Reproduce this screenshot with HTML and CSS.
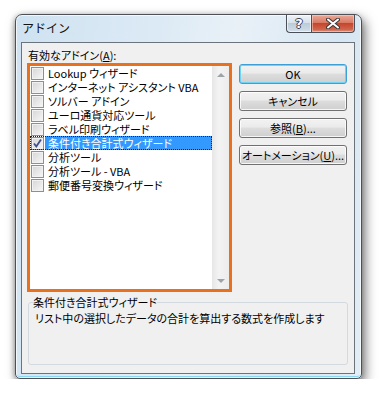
FILE: index.html
```html
<!DOCTYPE html>
<html lang="ja">
<head>
  <meta charset="UTF-8">
  <title>アドイン</title>
  <link rel="stylesheet" href="styles.css">
</head>
<body>

  <div class="window">
    <!-- タイトルバー -->
    <div class="titlebar">
      <span class="title">アドイン</span>
      <div class="caption">
        <button class="cap help">?</button>
        <button class="cap close">
          <svg width="14" height="11" viewBox="0 0 14 11">
            <path d="M2 1.5 L12 9.5 M12 1.5 L2 9.5" stroke="#3a3a3a" stroke-width="4" stroke-linecap="round"/>
            <path d="M2 1.5 L12 9.5 M12 1.5 L2 9.5" stroke="#fff" stroke-width="2" stroke-linecap="round"/>
          </svg>
        </button>
      </div>
    </div>

    <div class="client">
      <div class="label">有効なアドイン(<u>A</u>):</div>

      <div class="main">
        <div class="listwrap">
          <ul class="list">
            <li><span class="chk"></span><span class="txt">Lookup ウィザード</span></li>
            <li><span class="chk"></span><span class="txt">インターネット アシスタント VBA</span></li>
            <li><span class="chk"></span><span class="txt">ソルバー アドイン</span></li>
            <li><span class="chk"></span><span class="txt">ユーロ通貨対応ツール</span></li>
            <li><span class="chk"></span><span class="txt">ラベル印刷ウィザード</span></li>
            <li class="sel">
              <span class="chk">
                <svg width="11" height="11" viewBox="0 0 11 11"><path d="M2 5.5 L4.3 8.5 L9 1.5" fill="none" stroke="#3d4f8c" stroke-width="1.8"/></svg>
              </span><span class="txt">条件付き合計式ウィザード</span>
            </li>
            <li><span class="chk"></span><span class="txt">分析ツール</span></li>
            <li><span class="chk"></span><span class="txt">分析ツール - VBA</span></li>
            <li><span class="chk"></span><span class="txt">郵便番号変換ウィザード</span></li>
          </ul>
          <div class="scrollbar">
            <span class="sb-btn"><span class="arrow up"></span></span>
            <span class="sb-btn"><span class="arrow down"></span></span>
          </div>
        </div>

        <div class="buttons">
          <button class="btn default">OK</button>
          <button class="btn">キャンセル</button>
          <button class="btn">参照(<u>B</u>)...</button>
          <button class="btn">オートメーション(<u>U</u>)...</button>
        </div>
      </div>

      <fieldset class="group">
        <legend>条件付き合計式ウィザード</legend>
        <p>リスト中の選択したデータの合計を算出する数式を作成します</p>
      </fieldset>
    </div>
  </div>

</body>
</html>
```

FILE: styles.css
```css
body {
  margin: 0;
  background: #fff;
  font-family: "Noto Sans CJK JP", "Liberation Sans", sans-serif;
  font-size: 11px;
  font-feature-settings: "palt";
  color: #000;
}

.window {
  box-sizing: border-box;
  width: 347px;
  height: 365px;
  margin: 14px 0 0 15px;
  padding: 0 6px 4px 5px;
  display: flex;
  flex-direction: column;
  border: 1px solid #4d5156;
  border-radius: 7px 7px 5px 5px;
  background: linear-gradient(100deg, #cfe2f1 0%, #dceaf5 35%, #e9f1f7 55%, #d6e6f2 80%, #e3edf5 100%);
  box-shadow:
    inset 0 0 0 1px rgba(255, 255, 255, 0.7),
    inset 0 -2px 0 #8ad6f2,
    3px 5px 12px rgba(0, 0, 0, 0.55),
    -1px 1px 5px rgba(0, 0, 0, 0.25);
}

/* タイトルバー */
.titlebar {
  height: 27px;
  display: flex;
  justify-content: space-between;
  align-items: flex-start;
}
.title {
  padding: 6px 0 0 1px;
  line-height: 14px;
  font-size: 12px;
  font-feature-settings: normal;
  color: #111;
}
.caption { display: flex; }
.cap {
  box-sizing: border-box;
  height: 18px;
  padding: 0;
  margin: 0;
  border: 1px solid #4a4f58;
  border-top: none;
  display: flex;
  align-items: center;
  justify-content: center;
  cursor: pointer;
}
.help {
  width: 25px;
  border-right: none;
  border-radius: 0 0 0 4px;
  background: linear-gradient(#eef3f8, #d6e1ea 45%, #bccbd8 50%, #d3dfe9);
  box-shadow: inset 0 0 0 1px rgba(255, 255, 255, 0.6);
  font-family: "DejaVu Sans", sans-serif;
  font-weight: bold;
  font-size: 13px;
  color: #fff;
  text-shadow: 1px 0 0 #3a3f47, -1px 0 0 #3a3f47, 0 1px 0 #3a3f47, 0 -1px 0 #3a3f47;
}
.close {
  width: 44px;
  border-radius: 0 0 4px 0;
  background: linear-gradient(#eba999, #d97a64 45%, #c5462c 50%, #d0654c 85%, #e09682);
  box-shadow: inset 0 0 0 1px rgba(255, 220, 210, 0.5);
}

/* クライアント領域 */
.client {
  flex: 1;
  box-sizing: border-box;
  border: 1px solid #6b747d;
  background: #f0f0f0;
  padding: 5px 7px 8px 5px;
  display: flex;
  flex-direction: column;
}
.label {
  line-height: 14px;
  padding-left: 1px;
}

.main {
  display: flex;
  margin-top: 1px;
}

.listwrap {
  box-sizing: border-box;
  width: 205px;
  height: 229px;
  border: 3px solid #e8711f;
  background: #fff;
  display: flex;
}
.list {
  flex: 1;
  list-style: none;
  margin: 0;
  padding: 0;
}
.list li {
  display: flex;
  align-items: center;
  height: 14px;
  padding-left: 1px;
}
.chk {
  box-sizing: border-box;
  width: 13px;
  height: 13px;
  flex: none;
  border: 1px solid #8e8f8f;
  background: linear-gradient(135deg, #d6d6d6, #f7f7f7);
  box-shadow: inset 0 0 0 1px #f2f2f2;
  display: flex;
  align-items: center;
  justify-content: center;
  margin-right: 1px;
}
.txt {
  line-height: 14px;
  padding: 0 3px;
  white-space: nowrap;
}
.list li.sel {
  outline: 1px dotted #222;
  outline-offset: -1px;
}
.list li.sel .txt {
  flex: 1;
  background: #3399ff;
  color: #fff;
}

.scrollbar {
  width: 17px;
  background: linear-gradient(90deg, #e6e6e6, #f3f3f3 40%, #ececec);
  display: flex;
  flex-direction: column;
  justify-content: space-between;
}
.sb-btn {
  height: 17px;
  display: flex;
  align-items: center;
  justify-content: center;
}
.arrow {
  width: 0;
  height: 0;
  border-left: 4px solid transparent;
  border-right: 4px solid transparent;
}
.arrow.up { border-bottom: 4px solid #9ea3a8; }
.arrow.down { border-top: 4px solid #9ea3a8; }

/* ボタン */
.buttons {
  display: flex;
  flex-direction: column;
  gap: 7px;
  margin: 1px 0 0 7px;
}
.btn {
  box-sizing: border-box;
  width: 108px;
  height: 20px;
  padding: 0;
  border: 1px solid #707070;
  border-radius: 3px;
  background: linear-gradient(#f2f2f2, #ebebeb 45%, #dddddd 50%, #cfcfcf);
  box-shadow: inset 0 0 0 1px rgba(255, 255, 255, 0.8);
  font-family: "Noto Sans CJK JP", sans-serif;
  font-size: 11px;
  font-feature-settings: "palt";
  line-height: 16px;
  white-space: nowrap;
  color: #000;
  cursor: pointer;
}
.btn.default {
  border-color: #3c9fd6;
  box-shadow: inset 0 0 0 1px #6fd3f5;
}

/* グループ */
.group {
  margin: 3px 0 0 1px;
  width: 320px;
  height: 70px;
  box-sizing: border-box;
  border: 1px solid #d3dadf;
  border-radius: 3px;
  padding: 0 4px;
}
.group legend {
  padding: 0;
  line-height: 14px;
}
.group p {
  margin: 2px 0 0 2px;
  line-height: 14px;
}
```
